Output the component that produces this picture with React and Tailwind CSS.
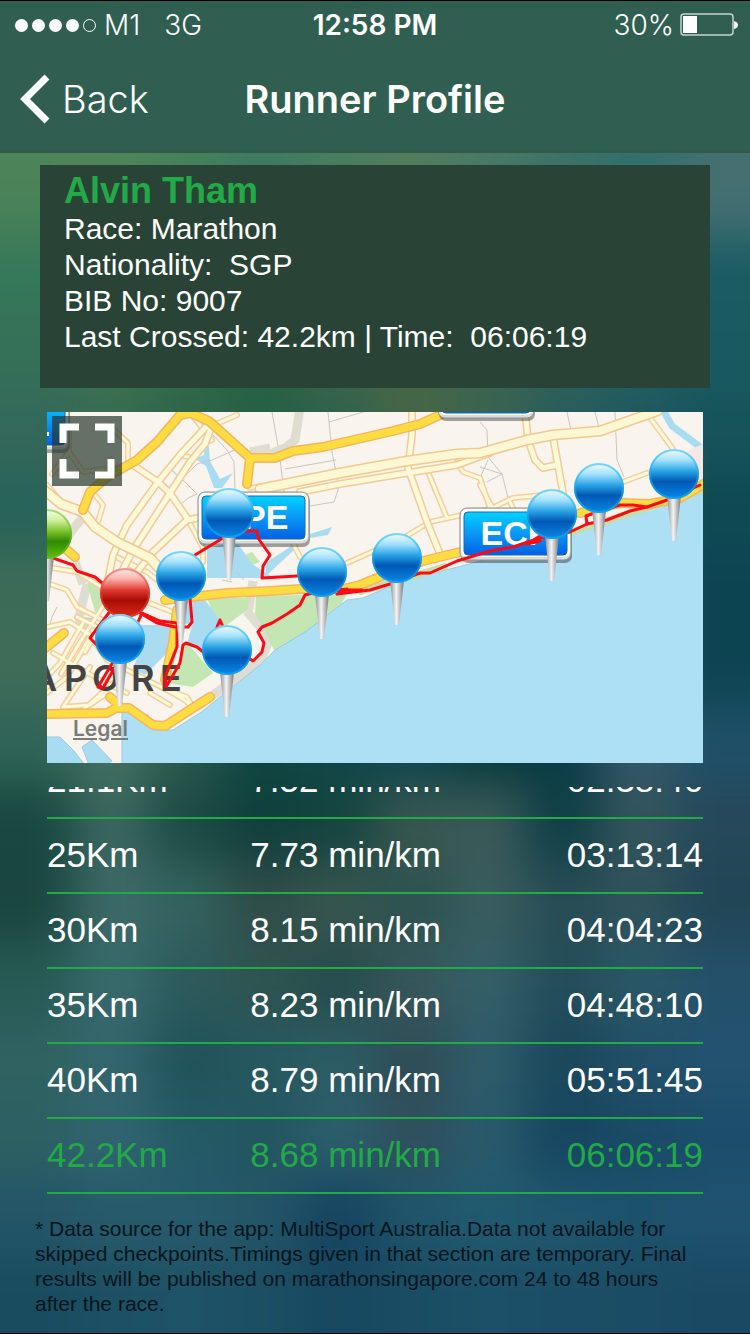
import React from 'react';

const runner = {
  name: 'Alvin Tham',
  race: 'Marathon',
  nationality: 'SGP',
  bib: '9007',
  lastCrossed: '42.2km',
  time: '06:06:19',
};

const splits = [
  { distance: '21.1Km', pace: '7.52 min/km', time: '02:38:46' },
  { distance: '25Km', pace: '7.73 min/km', time: '03:13:14' },
  { distance: '30Km', pace: '8.15 min/km', time: '04:04:23' },
  { distance: '35Km', pace: '8.23 min/km', time: '04:48:10' },
  { distance: '40Km', pace: '8.79 min/km', time: '05:51:45' },
  { distance: '42.2Km', pace: '8.68 min/km', time: '06:06:19', latest: true },
];

// Rows of colour patches, blurred together into the page backdrop
const backdrop = [
  ['#4f8558', '#4f8558', '#46825a', '#3f7d64', '#4c8060', '#54805f', '#4a7c68', '#3f7569', '#2f706b', '#456d74'],
  ['#4f8558', '#4f8558', '#46825a', '#3f7d64', '#4c8060', '#54805f', '#4a7c68', '#3f7569', '#2f706b', '#44706f'],
  ['#4b8258', '#4f8558', '#42805a', '#3a7860', '#467a5c', '#507a5a', '#467664', '#3a6f65', '#2f706b', '#456f72'],
  ['#35785a', '#3c7350', '#2f6b4c', '#256344', '#3a6648', '#476645', '#3a6450', '#2f625c', '#22605f', '#1a5c62'],
  ['#357058', '#3c7350', '#2f6b4c', '#256344', '#3a6648', '#476645', '#3a6450', '#2f625c', '#22605f', '#185a60'],
  ['#33685a', '#386a50', '#2f6348', '#256044', '#2f6050', '#476645', '#3a6450', '#285c5a', '#1f5860', '#16535b'],
  ['#286358', '#386a55', '#2f6048', '#1f5545', '#1f5550', '#2f5a50', '#205555', '#18505a', '#155058', '#0f4a54'],
  ['#3c6c58', '#46705c', '#306050', '#184c48', '#124850', '#104650', '#0a4048', '#10444c', '#1a4c58', '#0d4452'],
  ['#3f6c58', '#46705c', '#306050', '#144844', '#104448', '#104650', '#0a4048', '#10444c', '#1a4c58', '#0d4452'],
  ['#306458', '#42705f', '#28584c', '#0d4540', '#10484a', '#0f4650', '#083a3c', '#0a3c46', '#34586a', '#1f5068'],
  ['#18483f', '#3c6660', '#1c4a44', '#103f3c', '#15443f', '#38564f', '#3a5a58', '#0f3e46', '#34555c', '#26485a'],
  ['#1a463f', '#3c6a68', '#33625e', '#2f4c48', '#38564f', '#2c5250', '#3a5c5e', '#274c54', '#30525c', '#214656'],
  ['#275a54', '#386a6c', '#2c5a5c', '#2f5450', '#264c4c', '#37565a', '#335f68', '#234c58', '#2a5866', '#24506a'],
  ['#2f6260', '#34666f', '#205258', '#265860', '#2c5c64', '#2f4c56', '#2f5c6a', '#1a475a', '#224f68', '#225270'],
  ['#2c6062', '#316470', '#245a66', '#235560', '#2c5e6c', '#304f5c', '#295a6c', '#164560', '#1a4a66', '#1c4d6c'],
  ['#235568', '#275a6a', '#275a6c', '#235568', '#154460', '#1f556c', '#205a70', '#1f566e', '#1c526c', '#1f5270'],
  ['#1a4c60', '#1d5064', '#1e5266', '#1c4f64', '#164760', '#1a4d64', '#1b5068', '#1b4e66', '#1b4c65', '#1a4a63'],
];

const greyStreets = [
  'M124 57 L140 72 L150 82 L141 86 L133 93',
  'M165 22 L180 38 L187 50 L188 78',
  'M124 57 L132 66 M136 66 L150 52 L165 48 L190 37',
  'M225 0 L231 34 M233 47 L237 80',
  'M282 10 L340 -7 M281 0 L285 40 L292 75 L287 90 L263 94',
  'M238 57 L289 48',
  'M520 0 L524 18 M548 0 L552 16 M568 0 L570 48 L577 65',
  'M433 10 L440 18 L441 45 L455 62 L461 86 M441 48 L433 66',
  'M433 55 L455 62 L440 70',
  'M10 195 L5 205 L3 212 M190 160 L197 168 M175 168 L185 170',
];

const thinRoads = [
  'M63 14 L81 31 L81 53',
  'M0 73 L14 90',
  'M22 12 L22 40 L36 60 L75 55 M22 40 L5 62',
  'M48 83 L56 93 L51 110',
  'M144 2 L165 28 L158 30',
  'M133 43 L146 46',
  'M140 106 L156 136 L156 150',
  'M6 156 L30 160 L56 176',
  'M70 145 L100 160 L120 176',
  'M66 143 L88 156',
  'M0 171 L20 178 L30 195 L56 208',
  'M0 215 L23 210 L43 223 L60 248 L120 278 L136 287 L146 295',
  'M103 281 L123 293 M120 278 L140 285 L147 297',
  'M36 211 L13 251 L0 265',
  'M60 188 L30 235 L14 262',
  'M6 241 L53 268 L80 281',
  'M43 255 L16 295 L43 293 L60 281',
  'M66 271 L36 298',
  'M0 281 L20 265 L43 225',
  'M30 205 L52 216 L38 240',
  'M85 196 L60 214 L43 232',
  'M100 190 L128 201',
  'M381 60 L400 106',
  'M383 110 L443 97 L466 86 L516 81',
  'M300 151 L356 126 L383 110',
  'M576 70 L600 61',
  'M410 50 L416 60 L433 66 L443 96',
  'M601 3 L626 37',
  'M433 73 L446 97 M462 88 L466 96',
  'M246 131 L253 145',
  'M203 76 L223 73',
  'M160 16 L190 3',
];

const creamRoads = [
  'M160 14 L133 43 L111 70 L80 113 L66 143 L60 173',
  'M166 11 L158 32 L143 50 L123 81 L103 112 L86 138 L72 165',
  'M86 53 L111 70 L123 81 L140 106',
  'M151 106 L140 108 L106 140 L86 165 L60 190',
  'M253 80 L293 72 L360 61 L410 53 L443 41',
  'M365 -2 L365 23 L361 56 L380 110 L393 142',
  'M478 -2 L481 28 L488 48 L496 56 L510 53',
  'M506 25 L516 81',
];

const wideRoads = [
  'M-4 77 L14 92 L36 100 L48 115 L70 130 L103 146 L112 156',
  'M213 77 L293 61 L360 49 L410 42 L433 41 L480 28 L506 23 L553 19 L610 -1',
];

const highways = [
  'M133 3 L110 30 L90 48 L60 65 L43 80 L36 98',
  'M133 3 L143 1 L162 9 L182 27 L203 46 L228 46 L246 39 L276 35 L346 19 L373 12 L393 3 L402 -3',
  'M203 46 L200 72',
  'M118 188 L136 186 L180 181 L223 179 L253 177 L296 177 L313 173 L340 162 L376 149 L413 140',
  'M533 101 L573 91 L603 92 L633 86 L660 70',
  'M-4 302 L60 301 L69 296 L82 296 L106 313 L118 314 L163 285',
  'M-4 238 L17 221',
  'M20 138 L28 145',
  'M130 198 L126 230 L118 268',
  'M63 285 L71 292',
];

const routes = [
  'M0 144 L26 153 L30 159 L48 165 L60 175',
  'M64 198 L43 226 L48 231 L66 250 L51 275 L56 276 L68 255',
  'M93 201 L110 211 L128 215 L141 215 L145 210 L143 186',
  'M91 210 L95 201 L113 209 L130 211 L130 235 L118 265 L119 275 L133 251 L136 233 L139 231 L150 235 L160 243',
  'M170 215 L173 208 L176 215',
  'M203 247 L206 249 L215 240 L217 231 L211 220 L215 215 L225 211 L240 202 L253 193 L258 183 L266 181',
  'M266 181 L300 177 L290 182 L323 178 L343 172 L373 161 L383 161 L410 149 L443 139 L466 135 L493 126 L523 120 L540 112 L560 108 L583 99 L600 95 L620 88 L653 73',
  'M493 129 L480 132 L493 124 M285 178 L315 178',
  'M540 112 L539 104 L550 100 L573 93 L586 93 L600 95',
  'M148 143 L176 126 L200 119 L210 119 L211 126 L223 143 L216 154 L215 166 L250 164',
];

// Drawn back to front
const pins = [
  { x: 0, y: 122, color: 'green' },
  { x: 627, y: 62, color: 'blue' },
  { x: 552, y: 76, color: 'blue' },
  { x: 182, y: 101, color: 'blue' },
  { x: 505, y: 102, color: 'blue' },
  { x: 350, y: 146, color: 'blue' },
  { x: 275, y: 160, color: 'blue' },
  { x: 134, y: 164, color: 'blue' },
  { x: 78, y: 181, color: 'red' },
  { x: 73, y: 227, color: 'blue' },
  { x: 180, y: 238, color: 'blue' },
];

const pinStops = {
  blue: ['#f4fcff', '#a4e2fc', '#2aa4e6', '#0058b4', '#0a8ae8'],
  red: ['#fff0ee', '#fbb0aa', '#e03a30', '#a80c04', '#e02c1c'],
  green: ['#f8ffec', '#d2f0a0', '#7cc42c', '#2f8a04', '#62c010'],
};

const pinEdges = { blue: '#18b4f4', red: '#e8453c', green: '#6cc020' };

const Roads = ({ paths, width, fill, casing }) => (
  <g fill="none" strokeLinejoin="round" strokeLinecap="round">
    {paths.map((d) => (
      <path key={`c${d}`} d={d} stroke={casing} strokeWidth={width + 3} />
    ))}
    {paths.map((d) => (
      <path key={d} d={d} stroke={fill} strokeWidth={width} />
    ))}
  </g>
);

const RoadSign = ({ x, y, width, height, label }) => (
  <g>
    <rect x={x + 1} y={y + 3} width={width} height={height} rx="7" fill="#000" opacity="0.35" />
    <rect x={x} y={y} width={width} height={height} rx="7" fill="#d9dcde" stroke="#8d9194" />
    <rect x={x + 1} y={y + 1} width={width - 2} height={height - 4} rx="6" fill="#fff" />
    <rect x={x + 4} y={y + 4} width={width - 8} height={height - 9} rx="4" fill="url(#sign)" stroke="#1668b8" />
    {label && (
      <text
        x={x + width / 2}
        y={y + 37}
        textAnchor="middle"
        className="fill-white font-['Liberation_Sans',Arial,sans-serif] text-[34px] font-bold"
      >
        {label}
      </text>
    )}
  </g>
);

const Pin = ({ x, y, color }) => (
  <g>
    <path d={`M${x - 7} ${y + 22} L${x + 7} ${y + 22} L${x + 2} ${y + 67} L${x - 2} ${y + 67} Z`} fill="url(#needle)" />
    <circle cx={x} cy={y} r="25" fill={`url(#pin-${color})`} />
    <circle cx={x} cy={y} r="24" fill="none" stroke={pinEdges[color]} strokeWidth="2" opacity="0.55" />
  </g>
);

const CourseMap = () => (
  <svg viewBox="0 0 656 351" className="block w-full" role="img" aria-label="Course map">
    <defs>
      <linearGradient id="sign" x1="0" y1="0" x2="0" y2="1">
        <stop offset="0" stopColor="#00d2ff" />
        <stop offset="0.5" stopColor="#0a98f5" />
        <stop offset="1" stopColor="#0060e6" />
      </linearGradient>
      <linearGradient id="needle" x1="0" y1="0" x2="1" y2="0">
        <stop offset="0" stopColor="#8c8f92" />
        <stop offset="0.45" stopColor="#f4f4f4" />
        <stop offset="1" stopColor="#77797c" />
      </linearGradient>
      {Object.entries(pinStops).map(([name, stops]) => (
        <linearGradient key={name} id={`pin-${name}`} x1="0" y1="0" x2="0" y2="1">
          <stop offset="0" stopColor={stops[0]} />
          <stop offset="0.22" stopColor={stops[1]} />
          <stop offset="0.44" stopColor={stops[2]} />
          <stop offset="0.65" stopColor={stops[3]} />
          <stop offset="1" stopColor={stops[4]} />
        </linearGradient>
      ))}
    </defs>

    {/* Land, parks and water */}
    <rect width="656" height="351" fill="#f9f4ed" />
    <path d="M253 -4 L248 28 L238 36 L213 46 M203 40 L223 36 M36 105 L20 125 M40 172 L32 206 L40 222 M28 150 L36 172 M206 169 L201 201 L223 226 L214 248 L150 295" fill="none" stroke="#dfdcd2" strokeWidth="9" strokeLinejoin="round" />
    <path d="M40 171 L53 171 L62 191 L48 200 Z M160 186 L203 186 L200 198 L173 218 Z M140 231 L166 261 L146 275 L121 271 Z M190 146 L205 140 L213 150 L200 155 Z M209 184 L300 182 L292 196 L256 222 L228 240 L216 215 L208 202 Z" fill="#c3e6b3" />
    <path d="M143 3 L160 13 L163 49 L173 67 L186 61 L175 76 L167 76 L159 54 L148 47 L157 43 L158 26 Z M160 136 L190 130 L205 152 L224 164 L212 166 L160 166 Z M220 150 L246 133 L248 137 L218 165 Z M263 122 L285 115 L281 123 L263 126 Z M134 190 L155 184 L176 212 L158 239 L140 232 L146 210 L130 215 Z M70 213 L128 213 L126 235 L98 263 L86 257 L92 240 Z M36 205 L46 206 L50 214 L40 214 Z" fill="#a9dcf0" />
    <path d="M616 -2 L625 14 L660 40" fill="none" stroke="#a9dcf0" strokeWidth="7" />
    <path d="M634 42 L656 32 L656 72 L636 60 Z" fill="#f8e6e2" />
    <path d="M660 80 L600 98 L540 117 L526 121 L460 142 L380 163 L346 173 L316 186 L300 188 L258 220 L228 238 L213 253 L153 301 L126 318 L106 318 L101 303 L75 297 L75 355 L660 355 Z" fill="#addff5" stroke="#97cde2" />
    <path d="M656 78 L600 96 L540 115 L470 138 M400 154 L340 172 L312 180" fill="none" stroke="#c3e0a8" strokeWidth="7" />
    <path d="M-2 325 L13 325 L27 339 L38 353 L-2 353 Z M35 335 L45 328 L65 349 L58 353 L42 353 Z" fill="#a9dcf0" stroke="#97cde2" />

    {/* Streets */}
    <g fill="none" stroke="#c9c7c2">
      {greyStreets.map((d) => (
        <path key={d} d={d} />
      ))}
    </g>
    <Roads paths={thinRoads} width={3} fill="#fdf9d9" casing="#f4cf9f" />
    <Roads paths={creamRoads} width={5} fill="#fdf9d9" casing="#f4cb98" />
    <Roads paths={wideRoads} width={8} fill="#fdf8d4" casing="#f4c890" />
    <Roads paths={highways} width={7} fill="#ffdc3f" casing="#f3b566" />

    {/* Signs and place name */}
    <RoadSign x={-60} y={-16} width={82} height={54} />
    <path d="M0 20 h2 v4 h-2 Z" fill="#fff" />
    <RoadSign x={391} y={-46} width={96} height={52} />
    <RoadSign x={151} y={80} width={111} height={52} label="KPE" />
    <RoadSign x={413} y={96} width={111} height={52} label="ECP" />
    <text x="-16 17 45 84 113" y="279" className="fill-[#444] font-['Inter',sans-serif] text-[36px] font-semibold">
      APORE
    </text>

    <g fill="none" stroke="#ff0a14" strokeWidth="3" strokeLinejoin="round" strokeLinecap="round">
      {routes.map((d) => (
        <path key={d} d={d} />
      ))}
    </g>
    {pins.map((pin) => (
      <Pin key={`${pin.x}-${pin.y}`} {...pin} />
    ))}
  </svg>
);

// The outermost patches run past the edges so that the blur stays opaque there
const Backdrop = () => (
  <svg
    viewBox="0 0 750 1360"
    preserveAspectRatio="none"
    aria-hidden="true"
    className="absolute inset-0 -z-10 h-full w-full"
  >
    <defs>
      <filter id="soften" filterUnits="userSpaceOnUse" x="-100" y="-100" width="950" height="1560" colorInterpolationFilters="sRGB">
        <feGaussianBlur stdDeviation="24" />
      </filter>
    </defs>
    <g filter="url(#soften)">
      {backdrop.map((row, r) => {
        const top = r === 0 ? -100 : r * 80;
        const bottom = r === backdrop.length - 1 ? 1460 : r * 80 + 81;
        return row.map((color, c) => {
          const left = c === 0 ? -100 : c * 75;
          const right = c === row.length - 1 ? 850 : c * 75 + 76;
          return <rect key={`${r}-${c}`} x={left} y={top} width={right - left} height={bottom - top} fill={color} />;
        });
      })}
    </g>
  </svg>
);

const StatusBar = () => (
  <div className="grid grid-cols-[1fr_auto_1fr] items-center px-3 pt-1.5 font-['Inter',sans-serif] text-[28px] leading-9 text-white">
    <div className="flex items-center pl-[3px]">
      <div className="flex gap-1">
        {[1, 2, 3, 4].map((dot) => (
          <span key={dot} className="size-[13px] rounded-full bg-white" />
        ))}
        <span className="size-[13px] rounded-full border border-white" />
      </div>
      <span className="ml-2 font-light">M1</span>
      <span className="ml-6 font-light">3G</span>
    </div>
    <span className="text-center font-semibold">12:58 PM</span>
    <div className="flex items-center justify-end gap-1.5 font-light">
      <span>30%</span>
      <svg width="58" height="24" viewBox="0 0 58 24" aria-hidden="true">
        <rect x="1" y="1" width="52" height="21" rx="3" fill="none" stroke="#c4d3cf" strokeWidth="1.5" />
        <rect x="3" y="3" width="14" height="17" fill="#fff" />
        <path d="M54 8 Q58 9 58 12 Q58 15 54 16 Z" fill="#fff" />
      </svg>
    </div>
  </div>
);

const NavBar = () => (
  <div className="grid flex-1 grid-cols-[1fr_auto_1fr] items-center px-5 pt-1 font-['Inter',sans-serif] text-[38px] text-white">
    <button type="button" className="flex items-center gap-3 font-light">
      <svg width="30" height="50" viewBox="0 0 30 50" aria-hidden="true">
        <path d="M27 3 L5 25 L27 47" fill="none" stroke="#fff" strokeWidth="7" />
      </svg>
      Back
    </button>
    <h1 className="font-semibold">Runner Profile</h1>
  </div>
);

const RunnerCard = () => (
  <section className="mx-10 mt-3 bg-[#294436] px-6 pt-1.5 pb-[33px] text-[30px] leading-9 text-white">
    <h2 className="text-4xl font-bold text-[#22aa46]">{runner.name}</h2>
    <p>Race: {runner.race}</p>
    <p>
      Nationality:&nbsp; {runner.nationality}
    </p>
    <p>BIB No: {runner.bib}</p>
    <p>
      Last Crossed: {runner.lastCrossed} | Time:&nbsp; {runner.time}
    </p>
  </section>
);

const SplitsTable = () => (
  <div className="mx-[47px] mt-6 flex h-[407px] flex-col justify-end overflow-hidden">
    <table className="w-full table-fixed text-[35px] leading-[71px] text-white">
      <tbody>
        {splits.map((split) => (
          <tr key={split.distance} className={`border-b-2 border-[#22aa46] ${split.latest ? 'text-[#22aa46]' : ''}`}>
            <td className="w-[31%] pb-0.5">{split.distance}</td>
            <td className="w-[39%] pb-0.5">{split.pace}</td>
            <td className="pb-0.5 text-right">{split.time}</td>
          </tr>
        ))}
      </tbody>
    </table>
  </div>
);

const App = () => {
  return (
    <div className="relative isolate flex min-h-screen flex-col overflow-hidden border-y border-black font-['Liberation_Sans',Arial,sans-serif]">
      <Backdrop />
      <header className="flex h-[152px] flex-col border-b-2 border-[#355a4a] bg-[#305f52]">
        <StatusBar />
        <NavBar />
      </header>
      <main>
        <RunnerCard />
        <div className="relative mx-[47px] mt-6 overflow-hidden">
          <CourseMap />
          <button
            type="button"
            aria-label="Full screen map"
            className="absolute top-1 left-[5px] flex size-[70px] items-center justify-center bg-[#26382d]/70"
          >
            <svg width="56" height="56" viewBox="0 0 56 56" aria-hidden="true">
              <path d="M4 20 V4 H20 M36 4 H52 V20 M52 36 V52 H36 M20 52 H4 V36" fill="none" stroke="#fff" strokeWidth="7" />
            </svg>
          </button>
          <a
            href="#legal"
            className="absolute bottom-5 left-[26px] font-['Inter',sans-serif] text-[21px] leading-7 font-semibold text-[#7b7b78] underline"
          >
            Legal
          </a>
        </div>
        <SplitsTable />
        <p className="mt-[22px] mr-[52px] mb-4 ml-[35px] text-[21px] leading-[25px] text-[#04161c]">
          * Data source for the app: MultiSport Australia.Data not available for skipped checkpoints.Timings given in
          that section are temporary. Final results will be published on marathonsingapore.com 24 to 48 hours after the
          race.
        </p>
      </main>
    </div>
  );
};

export default App;
